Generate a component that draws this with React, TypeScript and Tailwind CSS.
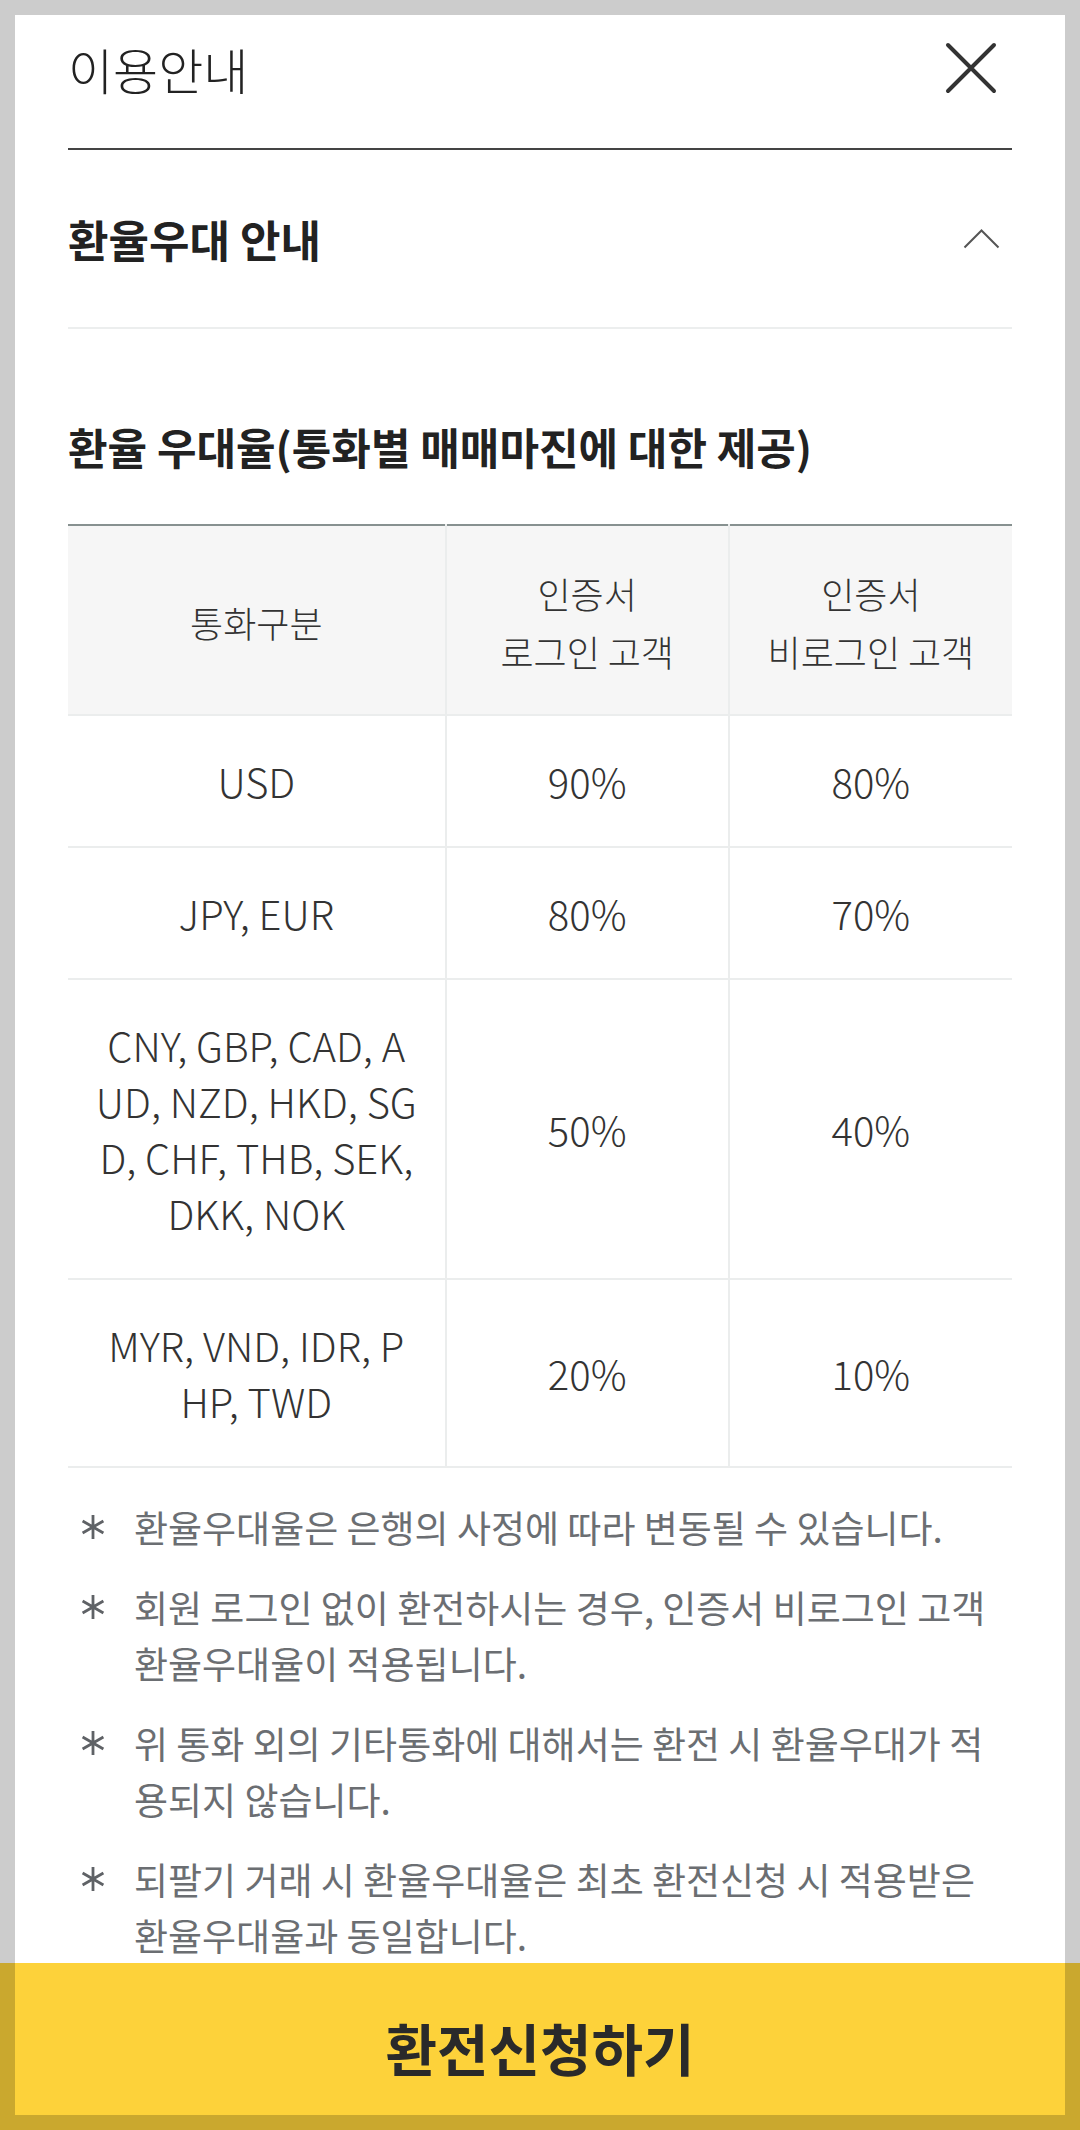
import React from "react"

const rows = [
  { currency: ["USD"], login: "90%", guest: "80%" },
  { currency: ["JPY, EUR"], login: "80%", guest: "70%" },
  {
    currency: ["CNY, GBP, CAD, A", "UD, NZD, HKD, SG", "D, CHF, THB, SEK,", "DKK, NOK"],
    login: "50%",
    guest: "40%",
  },
  { currency: ["MYR, VND, IDR, P", "HP, TWD"], login: "20%", guest: "10%" },
]

const notes = [
  ["환율우대율은 은행의 사정에 따라 변동될 수 있습니다."],
  ["회원 로그인 없이 환전하시는 경우, 인증서 비로그인 고객", "환율우대율이 적용됩니다."],
  ["위 통화 외의 기타통화에 대해서는 환전 시 환율우대가 적", "용되지 않습니다."],
  ["되팔기 거래 시 환율우대율은 최초 환전신청 시 적용받은", "환율우대율과 동일합니다."],
]

const Lines = ({ lines }: { lines: string[] }) => (
  <>
    {lines.map((line, i) => (
      <React.Fragment key={i}>
        {i > 0 && <br />}
        {line}
      </React.Fragment>
    ))}
  </>
)

const CloseIcon = () => (
  <svg width="52" height="52" viewBox="0 0 52 52" fill="none">
    <path d="M3 3L49 49M49 3L3 49" stroke="#333" strokeWidth="4" strokeLinecap="round" />
  </svg>
)

const ChevronUp = () => (
  <svg width="37" height="20" viewBox="0 0 37 20" fill="none">
    <polyline points="1.5,18.5 18.5,1.5 35.5,18.5" stroke="#555" strokeWidth="2" />
  </svg>
)

const Asterisk = () => (
  <svg width="28" height="28" viewBox="0 0 28 28" fill="none">
    <path d="M14 2V26M3.6 8L24.4 20M3.6 20L24.4 8" stroke="#5f6266" strokeWidth="2.8" />
  </svg>
)

export default function App() {
  return (
    <div className="relative w-[1080px] h-[2130px] overflow-hidden bg-white font-['Noto_Sans_CJK_KR','Noto_Sans',sans-serif]">
      <div className="flex h-full flex-col">
        <div className="min-h-0 flex-1 overflow-hidden px-[68px]">
          {/* modal header */}
          <div className="flex h-[150px] items-start justify-between border-b-2 border-[#444] pt-[40px]">
            <h1 className="text-[49px] font-light leading-[58px] text-[#222]">이용안내</h1>
            <button className="mr-[15px] mt-[2px]">
              <CloseIcon />
            </button>
          </div>

          {/* accordion */}
          <div className="flex h-[179px] items-center justify-between border-b-2 border-[#eceeee]">
            <h2 className="text-[44px] font-bold leading-[56px] text-[#222]">환율우대 안내</h2>
            <span className="mr-[12px]">
              <ChevronUp />
            </span>
          </div>

          <h3 className="pb-[48px] pt-[87px] text-[43px] font-bold leading-[60px] text-[#222]">
            환율 우대율(통화별 매매마진에 대한 제공)
          </h3>

          <table className="w-full table-fixed border-collapse border-t-2 border-[#879190] text-center text-[#333]">
            <colgroup>
              <col className="w-[40%]" />
              <col className="w-[30%]" />
              <col className="w-[30%]" />
            </colgroup>
            <thead>
              <tr className="bg-[#f6f6f6] text-[36px] font-light leading-[58px]">
                <th className="border-b-2 border-[#ebeded] pb-[34px] pt-[38px] font-light">통화구분</th>
                <th className="border-b-2 border-l-2 border-[#ebeded] pb-[34px] pt-[38px] font-light">
                  인증서
                  <br />
                  로그인 고객
                </th>
                <th className="border-b-2 border-l-2 border-[#ebeded] pb-[34px] pt-[38px] font-light">
                  인증서
                  <br />
                  비로그인 고객
                </th>
              </tr>
            </thead>
            <tbody className="text-[40px] font-light leading-[56px]">
              {rows.map((row) => (
                <tr key={row.login + row.guest}>
                  <td className="whitespace-nowrap border-b-2 border-[#ebeded] py-[37px]">
                    <Lines lines={row.currency} />
                  </td>
                  <td className="border-b-2 border-l-2 border-[#ebeded] py-[37px]">{row.login}</td>
                  <td className="border-b-2 border-l-2 border-[#ebeded] py-[37px]">{row.guest}</td>
                </tr>
              ))}
            </tbody>
          </table>

          {/* notes */}
          <ul className="mt-[31px] flex flex-col gap-[24px]">
            {notes.map((note, i) => (
              <li key={i} className="flex">
                <span className="flex h-[56px] w-[66px] shrink-0 items-center pl-[11px]">
                  <Asterisk />
                </span>
                <p className="whitespace-nowrap text-[37px] leading-[56px] text-[#6b6e72]">
                  <Lines lines={note} />
                </p>
              </li>
            ))}
          </ul>
        </div>

        <button className="h-[167px] w-full shrink-0 bg-[#fdd23a] text-[56px] font-bold text-[#2a2a2a]">
          환전신청하기
        </button>
      </div>

      {/* dimmed frame of the overlay */}
      <div className="pointer-events-none absolute inset-0 border-[15px] border-black/20" />
    </div>
  )
}
